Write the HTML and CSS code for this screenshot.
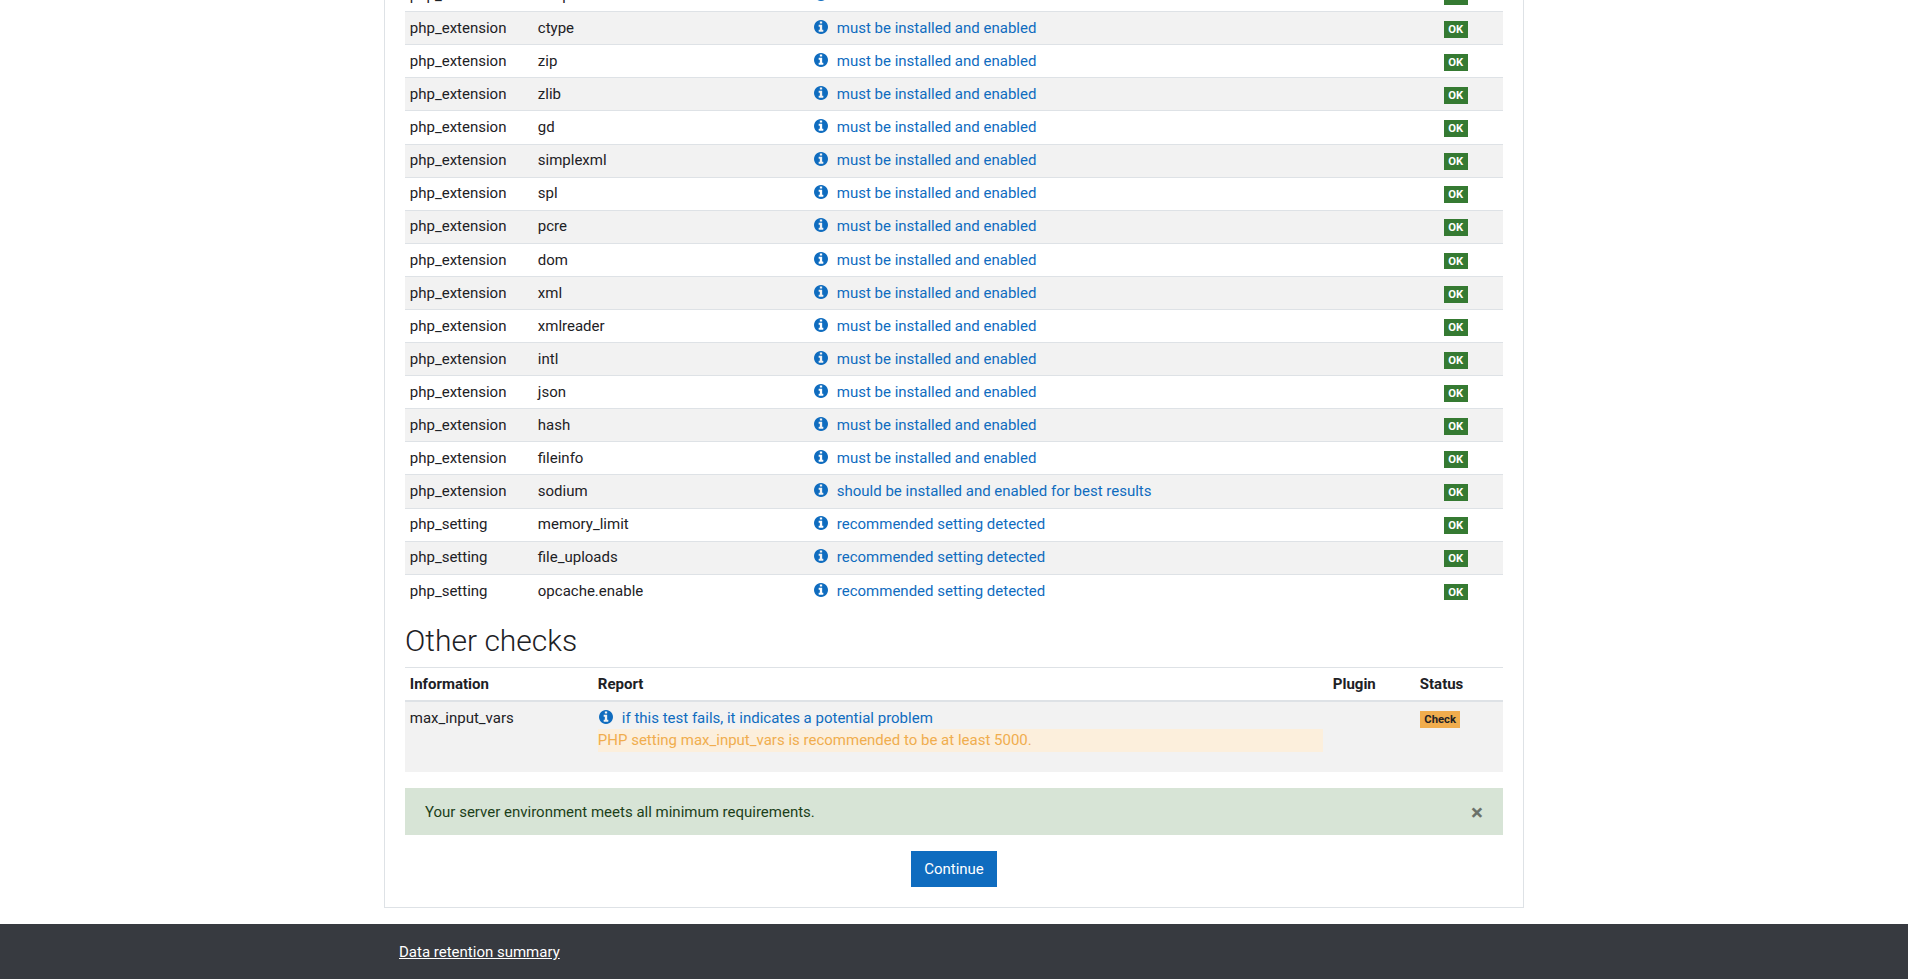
FILE: index.html
```html
<!DOCTYPE html>
<html lang="en">
<head>
<meta charset="utf-8">
<title>Server checks</title>
<link rel="stylesheet" href="styles.css">
</head>
<body>
<svg class="sprite" width="0" height="0" aria-hidden="true"><symbol id="info" viewBox="0 128 1536 1536"><path fill-rule="evenodd" d="M1024 1376v-160q0-14-9-23t-23-9h-96v-512q0-14-9-23t-23-9h-320q-14 0-23 9t-9 23v160q0 14 9 23t23 9h96v320h-96q-14 0-23 9t-9 23v160q0 14 9 23t23 9h448q14 0 23-9t9-23zm-128-896v-160q0-14-9-23t-23-9h-192q-14 0-23 9t-9 23v160q0 14 9 23t23 9h192q14 0 23-9t9-23zm640 416q0 209-103 385.5t-279.5 279.5-385.5 103-385.5-103-279.5-279.5-103-385.5 103-385.5 279.5-279.5 385.5-103 385.5 103 279.5 279.5 103 385.5z"/></symbol></svg>
<div class="page">
  <main class="card">
    <table class="checks env">
      <colgroup><col class="c-name"><col class="c-info"><col class="c-report"><col class="c-status"></colgroup>
      <tbody>
        <tr><td>php_extension</td><td>soap</td><td><a class="rep" href="#"><svg class="ic"><use href="#info"/></svg>must be installed and enabled</a></td><td><span class="badge ok">OK</span></td></tr>
        <tr><td>php_extension</td><td>ctype</td><td><a class="rep" href="#"><svg class="ic"><use href="#info"/></svg>must be installed and enabled</a></td><td><span class="badge ok">OK</span></td></tr>
        <tr><td>php_extension</td><td>zip</td><td><a class="rep" href="#"><svg class="ic"><use href="#info"/></svg>must be installed and enabled</a></td><td><span class="badge ok">OK</span></td></tr>
        <tr><td>php_extension</td><td>zlib</td><td><a class="rep" href="#"><svg class="ic"><use href="#info"/></svg>must be installed and enabled</a></td><td><span class="badge ok">OK</span></td></tr>
        <tr><td>php_extension</td><td>gd</td><td><a class="rep" href="#"><svg class="ic"><use href="#info"/></svg>must be installed and enabled</a></td><td><span class="badge ok">OK</span></td></tr>
        <tr><td>php_extension</td><td>simplexml</td><td><a class="rep" href="#"><svg class="ic"><use href="#info"/></svg>must be installed and enabled</a></td><td><span class="badge ok">OK</span></td></tr>
        <tr><td>php_extension</td><td>spl</td><td><a class="rep" href="#"><svg class="ic"><use href="#info"/></svg>must be installed and enabled</a></td><td><span class="badge ok">OK</span></td></tr>
        <tr><td>php_extension</td><td>pcre</td><td><a class="rep" href="#"><svg class="ic"><use href="#info"/></svg>must be installed and enabled</a></td><td><span class="badge ok">OK</span></td></tr>
        <tr><td>php_extension</td><td>dom</td><td><a class="rep" href="#"><svg class="ic"><use href="#info"/></svg>must be installed and enabled</a></td><td><span class="badge ok">OK</span></td></tr>
        <tr><td>php_extension</td><td>xml</td><td><a class="rep" href="#"><svg class="ic"><use href="#info"/></svg>must be installed and enabled</a></td><td><span class="badge ok">OK</span></td></tr>
        <tr><td>php_extension</td><td>xmlreader</td><td><a class="rep" href="#"><svg class="ic"><use href="#info"/></svg>must be installed and enabled</a></td><td><span class="badge ok">OK</span></td></tr>
        <tr><td>php_extension</td><td>intl</td><td><a class="rep" href="#"><svg class="ic"><use href="#info"/></svg>must be installed and enabled</a></td><td><span class="badge ok">OK</span></td></tr>
        <tr><td>php_extension</td><td>json</td><td><a class="rep" href="#"><svg class="ic"><use href="#info"/></svg>must be installed and enabled</a></td><td><span class="badge ok">OK</span></td></tr>
        <tr><td>php_extension</td><td>hash</td><td><a class="rep" href="#"><svg class="ic"><use href="#info"/></svg>must be installed and enabled</a></td><td><span class="badge ok">OK</span></td></tr>
        <tr><td>php_extension</td><td>fileinfo</td><td><a class="rep" href="#"><svg class="ic"><use href="#info"/></svg>must be installed and enabled</a></td><td><span class="badge ok">OK</span></td></tr>
        <tr><td>php_extension</td><td>sodium</td><td><a class="rep" href="#"><svg class="ic"><use href="#info"/></svg>should be installed and enabled for best results</a></td><td><span class="badge ok">OK</span></td></tr>
        <tr><td>php_setting</td><td>memory_limit</td><td><a class="rep" href="#"><svg class="ic"><use href="#info"/></svg>recommended setting detected</a></td><td><span class="badge ok">OK</span></td></tr>
        <tr><td>php_setting</td><td>file_uploads</td><td><a class="rep" href="#"><svg class="ic"><use href="#info"/></svg>recommended setting detected</a></td><td><span class="badge ok">OK</span></td></tr>
        <tr><td>php_setting</td><td>opcache.enable</td><td><a class="rep" href="#"><svg class="ic"><use href="#info"/></svg>recommended setting detected</a></td><td><span class="badge ok">OK</span></td></tr>
      </tbody>
    </table>

    <h3 class="section-title">Other checks</h3>

    <table class="checks other">
      <colgroup><col class="o-info"><col class="o-report"><col class="o-plugin"><col class="o-status"></colgroup>
      <thead>
        <tr><th>Information</th><th>Report</th><th>Plugin</th><th>Status</th></tr>
      </thead>
      <tbody>
        <tr>
          <td>max_input_vars</td>
          <td>
            <a class="rep" href="#"><svg class="ic"><use href="#info"/></svg>if this test fails, it indicates a potential problem</a>
            <div class="warn">PHP setting max_input_vars is recommended to be at least 5000.</div>
          </td>
          <td></td>
          <td><span class="badge check">Check</span></td>
        </tr>
      </tbody>
    </table>

    <div class="alert">
      <span>Your server environment meets all minimum requirements.</span>
      <button class="close" type="button" aria-label="Close">&times;</button>
    </div>

    <div class="actions"><button class="btn" type="button">Continue</button></div>
  </main>
  <footer class="footer">
    <div class="footer-inner"><a href="#">Data retention summary</a></div>
  </footer>
</div>
</body>
</html>
```
FILE: styles.css
```css
* { box-sizing: border-box; }
html, body { margin: 0; padding: 0; }
body {
  font-family: Roboto, "Liberation Sans", sans-serif;
  font-size: 15px;
  line-height: 1.5;
  color: #1d2125;
  background: #fff;
}
.sprite { position: absolute; }
.page {
  height: 100vh;
  overflow: hidden;
  display: flex;
  flex-direction: column;
  justify-content: flex-end;
}
.card {
  flex: none;
  width: 1140px;
  margin: 0 auto 16px;
  padding: 0 20px 20px;
  border: 1px solid #dee2e6;
  border-top: 0;
}
.checks {
  width: 100%;
  table-layout: fixed;
  border-collapse: collapse;
}
.checks td, .checks th {
  padding: 4.8px;
  text-align: left;
  vertical-align: top;
  border-top: 1px solid #dee2e6;
}
.checks th { font-weight: 700; }
.checks thead th { border-bottom: 2px solid #dee2e6; }
.env tbody tr:nth-child(even) { background: #f2f2f2; }
.other tbody tr { background: #f2f2f2; }
.other tbody td { border-top: 0; }
.c-name { width: 128px; }
.c-info { width: 275px; }
.c-status { width: 64px; }
.o-info { width: 188px; }
.o-plugin { width: 87px; }
.o-status { width: 88px; }
a { color: #0f6cbf; text-decoration: none; }
.ic {
  width: 16px;
  height: 14px;
  margin-right: 8px;
  fill: #0f6cbf;
  vertical-align: -1px;
}
.badge {
  display: inline-block;
  padding: 3px 4.5px 2.6px;
  font-size: 11.25px;
  font-weight: 700;
  line-height: 1;
  white-space: nowrap;
  vertical-align: baseline;
}
.ok { background: #357a32; color: #fff; }
.check { background: #f0ad4e; color: #1d2125; }
.warn {
  background: #fcefdc;
  color: #f0ad4e;
  margin-top: -0.4px;
  margin-bottom: 15.4px;
}
.section-title {
  margin: 16.5px 0 8px;
  font-size: 30px;
  font-weight: 300;
  line-height: 36px;
}
.alert {
  display: flex;
  justify-content: space-between;
  align-items: center;
  margin-top: 16px;
  padding: 12.75px 20px 11.75px;
  background: #d7e4d6;
  color: #1c3f1a;
}
.close {
  padding: 0;
  border: 0;
  background: none;
  font: 700 22.5px/1 Roboto, "Liberation Sans", sans-serif;
  color: #000;
  opacity: .5;
}
.actions { margin-top: 16px; text-align: center; }
.btn {
  padding: 6.75px 13px;
  border: 0;
  background: #0f6cbf;
  color: #fff;
  font: 15px/22.5px Roboto, "Liberation Sans", sans-serif;
}
.footer {
  flex: none;
  height: 55px;
  background: #373a40;
}
.footer-inner {
  width: 1140px;
  margin: 0 auto;
  padding: 17px 15px;
}
.footer a { color: #fff; text-decoration: underline; }
```
